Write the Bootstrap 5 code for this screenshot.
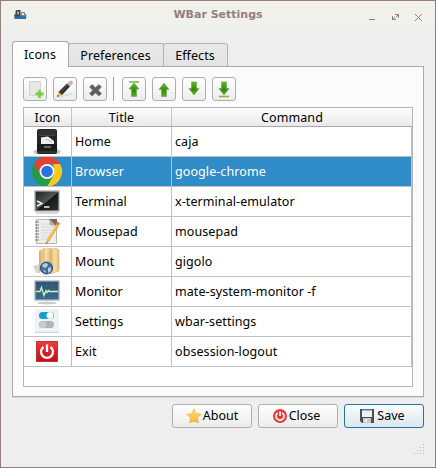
<!DOCTYPE html>
<html lang="en">
<head>
<meta charset="utf-8">
<meta name="viewport" content="width=device-width, initial-scale=1">
<title>WBar Settings</title>
<link rel="stylesheet" href="https://cdn.jsdelivr.net/npm/bootstrap@5.3.0/dist/css/bootstrap.min.css">
<style>
body{font:12.5px/18px "Noto Sans","DejaVu Sans",sans-serif;letter-spacing:.08px;color:#000;background:#eee}
svg{display:block;flex:none}
.win{width:436px;height:468px;border:1px solid #957e7c;background:#eee}
.titlebar{height:29px;background:#f0f1ea;color:#957e7c;font:bold 11px/14px "DejaVu Sans",sans-serif;letter-spacing:0;padding:0 8px 0 12px}
.titlebar .caption{padding-left:4px;padding-bottom:2px}
.wintabs{padding:11px 0 0 11px;height:36px}
.wintabs .nav-link{color:#000;padding:0 1px 0 0;border:1px solid #b4b4b4;border-bottom:0;border-radius:3px 3px 0 0;background:linear-gradient(#e9e9e9,#e3e3e3);height:23px;line-height:24px;text-align:center;margin-left:-1px}
.wintabs .nav-link.active{background:linear-gradient(#fff,#fbfbfb);height:26px;width:57px;line-height:26px;margin:0 0 -1px;position:relative;border-color:#aaa}
.wintabs .t-pref{width:96px}.wintabs .t-eff{width:65px}
.pane{margin:0 11px;width:412px;height:331px;border:1px solid #a9a9a9;background:#fbfbfb;padding:10px;box-shadow:0 1px 0 #dcdcdc}
.tools{gap:6px}
.tool,.act{border:1px solid #aeaeae;border-radius:3px;background:linear-gradient(#fefefe,#ececec);padding:0;color:#000;font-size:12.5px;line-height:18px}
.tool{width:24px;height:24px}
.sep{width:3px;height:24px;border-left:1px solid #a4a4a4}
.grid-box{width:390px;height:280px;border:1px solid #b4b4b4;background:#fff;margin-top:6px}
.hd,.rw{display:grid;grid-template-columns:48px 100px 240px}
.hd{height:19px;background:linear-gradient(#fdfdfd,#e9e9e9);border-bottom:1px solid #a9a9a9;text-align:center;line-height:19px}
.hd>div{border-right:1px solid #c4c4c4;height:18px}.hd>div:last-child{border:0}
.rw{height:30px}
.rw>div{border-right:1px solid #c1c1c1;border-bottom:1px solid #c1c1c1;padding-left:3px;line-height:29px;white-space:nowrap}
.rw>div:first-child{padding:0;overflow:hidden}
.rw.sel>div{background:#308cc6;color:#fff}
.actions{padding:7px 11px 0;gap:6px}
.act{width:80px;height:24px;gap:1px}
.act.prime{border-color:#2376a3;background:linear-gradient(#fafcfd,#dce6ed)}
.gripwrap{padding:15px 10px 0 0}
</style>
<script src="https://cdn.jsdelivr.net/npm/bootstrap@5.3.0/dist/js/bootstrap.bundle.min.js"></script>
</head>
<body class="overflow-hidden">
<svg width="0" height="0" class="position-absolute"><defs>
<linearGradient id="green" x2="0" y2="1"><stop stop-color="#68b72b"/><stop offset=".55" stop-color="#368b08"/><stop offset="1" stop-color="#51b51e"/></linearGradient>
<linearGradient id="dark" x2="1" y2="1"><stop stop-color="#202323"/><stop offset=".5" stop-color="#555"/><stop offset=".52" stop-color="#171919"/><stop offset="1" stop-color="#303232"/></linearGradient>
<linearGradient id="tan" x2="1"><stop stop-color="#d9ad65"/><stop offset=".5" stop-color="#f8dda8"/><stop offset="1" stop-color="#e5bd77"/></linearGradient>
<linearGradient id="red" x2="0" y2="1"><stop stop-color="#ee3e42"/><stop offset=".5" stop-color="#dc2025"/><stop offset="1" stop-color="#bd1117"/></linearGradient>
<linearGradient id="gold" x2="0" y2="1"><stop stop-color="#ffe26c"/><stop offset="1" stop-color="#f0b53c"/></linearGradient>
<linearGradient id="blue" x2="0" y2="1"><stop stop-color="#2d526f"/><stop offset="1" stop-color="#386d91"/></linearGradient>
</defs></svg>
<main class="win d-flex flex-column">
<header class="titlebar d-flex align-items-center justify-content-between">
 <svg width="52" height="17" viewBox="0 0 52 17"><path d="M1 7.500h12.500l-.5 4.500H1.500z" fill="#2b72b0"/><path d="M1 7.500h12v2H1z" fill="#4f7d9c"/><path d="M2.500 4.500q0-1.500 1.500-1.500h3.500v6.500h-5z" fill="#36454a"/><path d="M4 4.500h2v3H4z" fill="#a4aaa8"/><path d="M7.500 5H12v4H7.500z" fill="#7d8c8e"/><path d="M9 6h2v2H9z" fill="#e3e6e3"/></svg>
 <span class="caption">WBar Settings</span>
 <svg width="60" height="17" viewBox="0 0 60 17" fill="#957e7c" shape-rendering="crispEdges"><path d="M2 12h6v1H2z"/><path d="M28 7h4v4h-1V9h-1v1h-1V9h1V8h-2zM25 9h1v2h1v-1h1v1h-1v1h2v1h-4z"/><path d="M48 7h1v1h1v1h1v1h1V9h1V8h1V7h1v1h-1v1h-1v1h-1v1h1v1h1v1h1v1h-1v-1h-1v-1h-1v-1h-1v1h-1v1h-1v1h-1v-1h1v-1h1v-1h1v-1h-1V9h-1V8h-1z"/></svg>
</header>
<nav class="wintabs nav align-items-end flex-nowrap">
 <a class="nav-link active">Icons</a><a class="nav-link t-pref">Preferences</a><a class="nav-link t-eff">Effects</a>
</nav>
<section class="pane">
 <div class="tools d-flex">
 <button class="tool btn" aria-label="Add"><svg width="22" height="22"><path d="M5.500 3.500h11v14h-11z" fill="#e7e7e5" stroke="#d3d3d0"/><path d="M14 12h3v2.500h2.500v3H17V20h-3v-2.500h-2.500v-3H14z" fill="#77cc43" stroke="#b3dfa0" stroke-width=".7"/></svg></button>
 <button class="tool btn" aria-label="Edit"><svg width="22" height="22"><path d="M4 19l14-3" stroke="#ddd" stroke-width="2"/><path d="M3 19l1.500-5 4 3z" fill="#e8ca4e"/><path d="M3 19l.7-2 1.300 1z" fill="#222"/><path d="M4.500 14L13 5.500l3 3L8 17z" fill="#302e30"/><path d="M6 15l8.500-9" stroke="#555"/><path d="M13 5.500l2-2 3 3-2 2z" fill="#bbb"/><path d="M15 3.500q2.500-1.500 3.500 0t-.5 3z" fill="#e193cf"/></svg></button>
 <button class="tool btn" aria-label="Remove"><svg width="22" height="22"><path d="M5.500 9L8 6.500l3.500 3L15 6.500 17.500 9l-3.300 3.300 3.300 3.200L15 18l-3.500-3L8 18l-2.500-2.500 3.300-3.200z" fill="#5c605e" stroke="#777a78" stroke-width=".7"/></svg></button>
 <span class="sep"></span>
 <button class="tool btn" aria-label="Top"><svg width="22" height="22"><path d="M6 4h10" stroke="#72b94a" stroke-width="1.500"/><path d="M11 5l5 6h-2.500v7.500h-5V11H6z" fill="url(#green)" stroke="#65a646" stroke-width=".6"/></svg></button>
 <button class="tool btn" aria-label="Up"><svg width="22" height="22"><path d="M11 5l5 6.500h-2.500v7h-5v-7H6z" fill="url(#green)" stroke="#65a646" stroke-width=".6"/></svg></button>
 <button class="tool btn" aria-label="Down"><svg width="22" height="22"><path d="M11 17l5-6.500h-2.500V4h-5v6.500H6z" fill="url(#green)" stroke="#65a646" stroke-width=".6"/></svg></button>
 <button class="tool btn" aria-label="Bottom"><svg width="22" height="22"><path d="M6 18.500h10" stroke="#72b94a" stroke-width="1.500"/><path d="M11 17l5-6.500h-2.500V4h-5v6.500H6z" fill="url(#green)" stroke="#65a646" stroke-width=".6"/></svg></button>
 </div>
 <div class="grid-box">
 <div class="hd"><div>Icon</div><div>Title</div><div>Command</div></div>
 <div class="rw"><div><svg width="47" height="29"><path d="M9 24l5-2h18l5 2-2 3H11z" fill="#aaa" opacity=".65"/><path d="M15 2h16q2 0 2 2v21q0 2-2 2H15q-2 0-2-2V4q0-2 2-2z" fill="#242424"/><path d="M14 3h18v5H14z" fill="#303030"/><path d="M17 10.500l7-1 6 4.500v3H17z" fill="#eee"/><path d="M22 12l6 3" stroke="#b9b9b9"/><path d="M13 17h20v8H13z" fill="#1c1c1c"/><path d="M20 19h7v2h-7z" fill="#696969"/><path d="M15 8.500h16M14 25h18" stroke="#444"/></svg></div><div>Home</div><div>caja</div></div>
 <div class="rw sel"><div><svg width="47" height="29"><g transform="translate(23 14.500)"><path d="M-13-7.500A15 15 0 0 1 13-7.500H0L-6.500 3.750z" fill="#e44032"/><path d="M13-7.500A15 15 0 0 1 0 15l6.500-11.250V-7.500z" fill="#fbc91e"/><path d="M0 15A15 15 0 0 1-13-7.500L-6.500 3.750H6.500z" fill="#249b48"/><circle r="7.500" fill="#fff"/><circle r="5.800" fill="#2d70de"/></g></svg></div><div>Browser</div><div>google-chrome</div></div>
 <div class="rw"><div><svg width="47" height="29"><path d="M12 26h22" stroke="#ccc" stroke-width="1.500"/><rect x="10" y="3" width="26" height="22" rx="1" fill="#c9cac9"/><path d="M11.500 4.500h23v19h-23z" fill="url(#dark)"/><path d="M13 14l5 2.500-5 2.500M20 20h5.500" fill="none" stroke="#f2f2f2" stroke-width="1.400"/></svg></div><div>Terminal</div><div>x-terminal-emulator</div></div>
 <div class="rw"><div><svg width="47" height="29"><path d="M12.500 2.500h20v24h-20z" fill="#eee" stroke="#b6b6b6"/><path d="M17 7h10M17 10h12M17 13h11M17 16h10M17 19h8M17 22h6" stroke="#d8d8d8"/><path d="M25 2h8v8z" fill="#806855"/><path d="M25 2l1 6 6 1z" fill="#b9a799"/><path d="M11 5h4M11 8h4M11 11h4M11 14h4M11 17h4M11 20h4M11 23h4" stroke="#777"/><path d="M22 27l1-4.500L32.500 7 35 8.500l-9.500 15z" fill="#eaa62b"/><path d="M24 23L33 8" stroke="#ffda69"/><path d="M32 7L33.500 4.500 36 6.500l-1.500 2z" fill="#e67367"/><path d="M22 27l.5-2 1 .5z" fill="#333"/></svg></div><div>Mousepad</div><div>mousepad</div></div>
 <div class="rw"><div><svg width="47" height="29"><path d="M9 19l7-2v9h-4z" fill="#bbb" opacity=".6"/><path d="M15 4l5-3h8v22l-8 3-5-2z" fill="url(#tan)"/><path d="M26 3l6-2 3 2v21l-9 3z" fill="url(#tan)" stroke="#d6ae6d" stroke-width=".6"/><path d="M20 1v24" stroke="#d7ad6a" stroke-width=".6"/><circle cx="22.500" cy="21" r="6" fill="#446e9b" stroke="#284e78"/><path d="M18 18l3-2 3 1-1 3-3 1zM24 21l3-1v4l-3 2zM19 23l3 1-1 2z" fill="#b8cee0"/></svg></div><div>Mount</div><div>gigolo</div></div>
 <div class="rw"><div><svg width="47" height="29"><ellipse cx="23" cy="26" rx="10" ry="1.500" fill="#ccc"/><rect x="10" y="3" width="26" height="21" rx="1" fill="#c4cdd1"/><path d="M11.500 4.500h23v18h-23z" fill="url(#blue)"/><path d="M12 9h22M12 13h22M12 17h22M17 5v17M23 5v17M29 5v17" stroke="#446b86" stroke-width=".5"/><path d="M12 14.500h4l1.500-4 2.500 8 2-5 1 2 1.500-2 1 1h8.500" fill="none" stroke="#c9f3bf" stroke-width="1.300"/></svg></div><div>Monitor</div><div>mate-system-monitor -f</div></div>
 <div class="rw"><div><svg width="47" height="29"><rect x="11" y="2" width="24" height="24" rx="1" fill="#eff1f3"/><path d="M11 25.500h24" stroke="#cfd2d4"/><rect x="15" y="5" width="15" height="7" rx="3.500" fill="#149dce"/><circle cx="26" cy="8.500" r="3.500" fill="#fff"/><rect x="15" y="14" width="15" height="7" rx="3.500" fill="#aeb3b8"/><circle cx="19" cy="17.500" r="3.500" fill="#c7cbcf"/></svg></div><div>Settings</div><div>wbar-settings</div></div>
 <div class="rw"><div><svg width="47" height="29"><path d="M12.500 4.500h21v20h-21z" fill="url(#red)" stroke="#ca2c2f"/><path d="M19.500 10a6 6 0 1 0 7 0M23 7.500V15" fill="none" stroke="#fff" stroke-width="2.300"/></svg></div><div>Exit</div><div>obsession-logout</div></div>
 </div>
</section>
<footer class="actions d-flex justify-content-end">
 <button class="act btn d-flex align-items-center justify-content-center"><svg width="16" height="16"><path d="M8 .8l2.200 4.700 5.200.7-3.800 3.600 1 5.200L8 13.500 3.400 15l1-5.200L.6 6.200l5.200-.7z" fill="url(#gold)" stroke="#e8bb58" stroke-width=".6"/></svg>About</button>
 <button class="act btn d-flex align-items-center justify-content-center pe-1"><svg width="16" height="16"><circle cx="8" cy="8" r="7" fill="#df3d3e"/><path d="M5.800 4.800a4 4 0 1 0 4.400 0M8 3.500V8" fill="none" stroke="#fff" stroke-width="1.600"/></svg>Close</button>
 <button class="act prime btn d-flex align-items-center justify-content-center pe-1"><svg width="17" height="16"><path d="M1 1h14v14H3l-2-2z" fill="#4c5055"/><path d="M3 1.500h10V9H3z" fill="#edf0f2"/><path d="M3 1h10v1.500H3z" fill="#447daa"/><path d="M4 10h8v5H4z" fill="#c8c9cf"/><path d="M5.500 11H8v3H5.500z" fill="#eee"/></svg>Save</button>
</footer>
<div class="gripwrap d-flex justify-content-end"><svg width="14" height="14" fill="#b9b9b9" shape-rendering="crispEdges"><path d="M12 1h1v1h-1zM9 4h1v1H9zM12 4h1v1h-1zM6 7h1v1H6zM9 7h1v1H9zM12 7h1v1h-1zM3 10h1v1H3zM6 10h1v1H6zM9 10h1v1H9zM12 10h1v1h-1z"/></svg></div>
</main>
</body>
</html>
